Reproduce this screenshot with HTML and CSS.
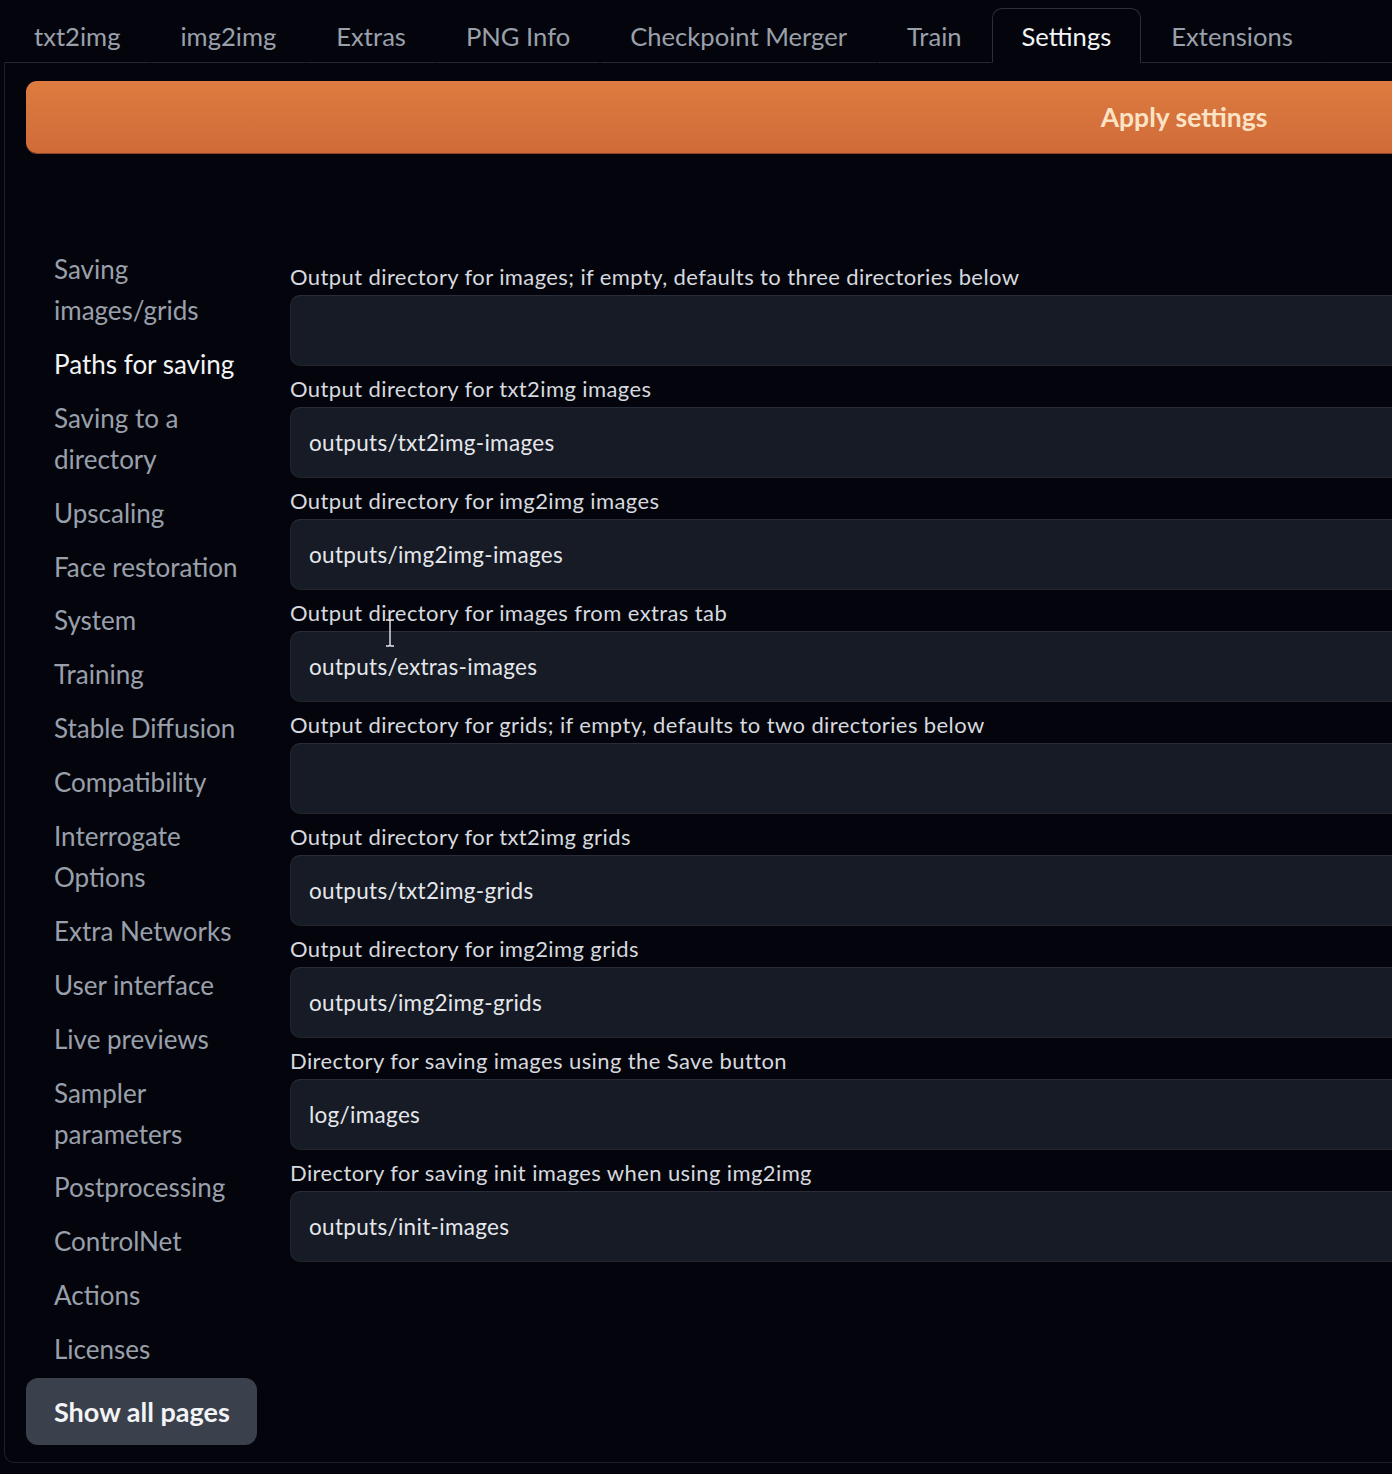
FILE: index.html
```html
<!DOCTYPE html>
<html lang="en">
<head>
<meta charset="utf-8">
<title>Settings</title>
<link rel="stylesheet" href="styles.css">
</head>
<body>
<div class="app">
  <div class="tabs">
    <div class="tab">txt2img</div>
    <div class="tab">img2img</div>
    <div class="tab">Extras</div>
    <div class="tab">PNG Info</div>
    <div class="tab">Checkpoint Merger</div>
    <div class="tab">Train</div>
    <div class="tab selected">Settings</div>
    <div class="tab">Extensions</div>
    <div class="tab-rest"></div>
  </div>
  <div class="panel">
    <button class="apply">Apply settings</button>
    <div class="settings">
      <div class="sidebar">
        <ul class="pages">
          <li>Saving images/grids</li>
          <li class="active">Paths for saving</li>
          <li>Saving to a directory</li>
          <li>Upscaling</li>
          <li>Face restoration</li>
          <li>System</li>
          <li>Training</li>
          <li>Stable Diffusion</li>
          <li>Compatibility</li>
          <li>Interrogate Options</li>
          <li>Extra Networks</li>
          <li>User interface</li>
          <li>Live previews</li>
          <li>Sampler parameters</li>
          <li>Postprocessing</li>
          <li>ControlNet</li>
          <li>Actions</li>
          <li>Licenses</li>
        </ul>
        <button class="show-all">Show all pages</button>
      </div>
      <div class="fields">
        <label class="field"><span class="label">Output directory for images; if empty, defaults to three directories below</span><input class="input" type="text" value=""></label>
        <label class="field"><span class="label">Output directory for txt2img images</span><input class="input" type="text" value="outputs/txt2img-images"></label>
        <label class="field"><span class="label">Output directory for img2img images</span><input class="input" type="text" value="outputs/img2img-images"></label>
        <label class="field cursor-host"><span class="label">Output directory for images from extras tab</span><input class="input" type="text" value="outputs/extras-images">
          <svg class="ibeam" width="12" height="28" viewBox="0 0 12 28"><path d="M2 1h3l1 1 1-1h3M6 2v24M2 27h3l1-1 1 1h3" fill="none" stroke="#e5e7eb" stroke-width="1.4"/></svg>
        </label>
        <label class="field"><span class="label">Output directory for grids; if empty, defaults to two directories below</span><input class="input" type="text" value=""></label>
        <label class="field"><span class="label">Output directory for txt2img grids</span><input class="input" type="text" value="outputs/txt2img-grids"></label>
        <label class="field"><span class="label">Output directory for img2img grids</span><input class="input" type="text" value="outputs/img2img-grids"></label>
        <label class="field"><span class="label">Directory for saving images using the Save button</span><input class="input" type="text" value="log/images"></label>
        <label class="field"><span class="label">Directory for saving init images when using img2img</span><input class="input" type="text" value="outputs/init-images"></label>
      </div>
    </div>
  </div>
</div>
</body>
</html>
```
FILE: styles.css
```css
html, body {
  margin: 0;
  padding: 0;
  width: 1392px;
  height: 1474px;
  overflow: hidden;
  background: #04050c;
}
.app {
  width: 2360px;
  font-family: Lato, "Open Sans", sans-serif;
  color: #9ca3af;
  padding-left: 4px;
}
.tabs {
  display: flex;
  height: 63px;
  box-sizing: border-box;
  padding-top: 8px;
}
.tab {
  padding: 0 29px;
  font-size: 25.6px;
  line-height: 54px;
  color: #9aa0ab;
  border: 1px solid transparent;
  border-bottom: 1px solid #232832;
  border-radius: 10px 10px 0 0;
  white-space: nowrap;
}
.tab.selected {
  color: #f3f4f6;
  border-color: #2a2f3a;
  border-bottom-color: transparent;
  background: #04050c;
}
.tab-rest {
  flex: 1;
  border-bottom: 1px solid #232832;
}
.panel {
  border: 1px solid #1d212b;
  border-top: none;
  border-radius: 0 0 10px 10px;
  padding: 18px 21px 17px;
}
.apply {
  display: block;
  width: 100%;
  height: 72px;
  border: none;
  border-radius: 11px;
  background: linear-gradient(to bottom, #dd7b40, #d06b39);
  color: #fde3c5;
  font-family: Lato, sans-serif;
  font-weight: 700;
  font-size: 26.5px;
  box-shadow: 0 1px 0 #8a4626;
}
.settings {
  display: flex;
  gap: 33px;
  margin-top: 96px;
}
.sidebar {
  width: 231px;
  flex: none;
}
.pages {
  list-style: none;
  margin: 0;
  padding: 0 0 0 28px;
  display: flex;
  flex-direction: column;
  gap: 12.9px;
}
.pages li {
  font-size: 26px;
  line-height: 41px;
  color: #9aa0ab;
}
.pages li.active {
  color: #f3f4f6;
}
.show-all {
  display: block;
  margin-top: 8px;
  width: 231px;
  height: 67px;
  border: none;
  border-radius: 12px;
  background: #3a404c;
  color: #f3f4f6;
  font-family: Lato, sans-serif;
  font-weight: 700;
  font-size: 27px;
  text-align: left;
  padding: 0 0 0 28px;
}
.fields {
  flex: 1;
  display: flex;
  flex-direction: column;
  gap: 11px;
  padding-top: 16px;
}
.field {
  display: flex;
  flex-direction: column;
  gap: 6px;
  position: relative;
}
.label {
  font-size: 22px;
  letter-spacing: 0.4px;
  line-height: 24px;
  color: #d6d9df;
  white-space: nowrap;
}
.input {
  height: 71px;
  box-sizing: border-box;
  background: #161b26;
  border: 1px solid #20252f;
  border-top-color: #272d39;
  border-radius: 10px;
  padding: 0 18px;
  font-family: Lato, sans-serif;
  font-size: 22.5px;
  letter-spacing: 0.3px;
  color: #e5e7eb;
  outline: none;
}
.ibeam {
  position: absolute;
  left: 94px;
  top: 18px;
}
```
